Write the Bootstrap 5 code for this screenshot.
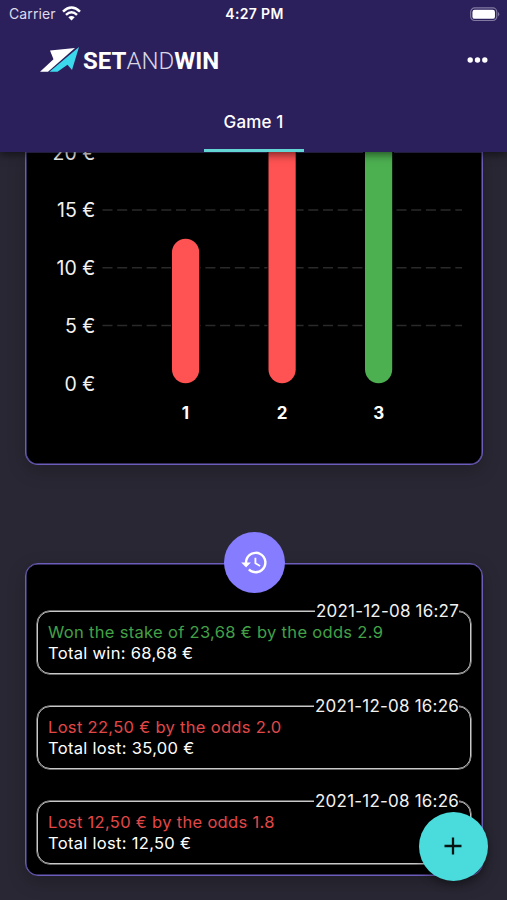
<!DOCTYPE html>
<html lang="en">
<head>
<meta charset="utf-8">
<meta name="viewport" content="width=device-width, initial-scale=1">
<title>SetAndWin</title>
<link href="https://cdn.jsdelivr.net/npm/bootstrap@5.3.0/dist/css/bootstrap.min.css" rel="stylesheet">
<style>
  body { font-family: Inter, "Liberation Sans", sans-serif; background: #292733; color: #fff; height: 900px; overflow: hidden; }
  .app-header { height: 152px; background: #2c205c; box-shadow: 0 3px 8px rgba(0,0,0,.5); z-index: 10; }
  .status-bar { height: 28px; padding: 0 7px 0 9px; display: grid; grid-template-columns: 1fr auto 1fr; font-size: 14px; line-height: 28px; }
  .carrier { color: #dedbea; letter-spacing: .1px; }
  .wifi { margin: -2px 0 0 6px; }
  .clock { letter-spacing: .35px; }
  .brand-row { height: 64px; padding: 0 19px 0 40px; }
  .brand-name { font-family: Roboto, sans-serif; font-size: 24px; line-height: 28px; margin: 2px 0 0 3px; }
  .brand-name b { font-weight: 700; }
  .brand-name span { font-weight: 300; color: #d9d6e6; }
  .game-tab { width: 100px; height: 60px; border-bottom: 3px solid #62d5d4; font-size: 17px; font-weight: 500; line-height: 60px; letter-spacing: .15px; }
  .panel { margin: 0 24px 0 25px; background: #000; border: 1px solid #6d5dbb; box-shadow: inset 0 0 0 .5px #6d5dbb, 0 6px 18px rgba(0,0,0,.22); }
  .chart-panel { height: 313px; border-top: 0; border-radius: 0 0 13px 13px; }
  .history-panel { margin-top: 98px; height: 313px; border-radius: 13px; padding: 47px 11px 0; }
  .history-icon { width: 61px; height: 61px; background: #857cff; top: -32px; left: 198px; }
  .bet { height: 63px; border: 1px solid #c9c9c9; box-shadow: 0 0 0 .5px #c9c9c9; border-radius: 13px; padding: 9.500px 10px; margin-bottom: 32.2px; font-size: 16.55px; line-height: 21px; letter-spacing: .3px; white-space: nowrap; }
  .bet time { right: 11px; top: -11px; background: #000; line-height: 21px; padding-left: 1px; color: #f1f1f1; font-size: 17px; letter-spacing: .21px; }
  .won { color: #43a047; }
  .lost { color: #e04848; }
  .add-btn { width: 69px; height: 69px; right: 19.500px; bottom: 19.500px; background: #4adcdc; box-shadow: 0 4px 8px rgba(0,0,0,.35); z-index: 5; }
</style>
<script src="https://cdn.jsdelivr.net/npm/bootstrap@5.3.0/dist/js/bootstrap.bundle.min.js"></script>
</head>
<body class="d-flex flex-column position-relative">
<header class="app-header position-relative flex-shrink-0">
  <div class="status-bar">
    <div class="d-flex align-items-center"><span class="carrier">Carrier</span>
      <svg class="wifi" width="19" height="15" viewBox="0 0 19 15" fill="none" stroke="#fff" stroke-width="2.500"><path d="M1 5.600Q9.500-2.500 18 5.600M4 8.800Q9.500 3.700 15 8.800"/><path d="M6.300 11.200Q9.500 8.600 12.700 11.200L9.500 14.500Z" fill="#fff" stroke="none"/></svg>
    </div>
    <div class="fw-semibold clock">4:27 PM</div>
    <div class="d-flex align-items-center justify-content-end">
      <svg width="30" height="15" viewBox="0 0 31 15"><rect x=".7" y=".7" width="27" height="13" rx="4.200" fill="none" stroke="#827aa1" stroke-width="1.200"/><rect x="2.500" y="2.500" width="23.300" height="9.500" rx="2.300" fill="#fff"/><path d="M29 5Q31.500 7.200 29 9.500Z" fill="#827aa1"/></svg>
    </div>
  </div>
  <div class="brand-row d-flex align-items-center justify-content-between">
    <div class="d-flex align-items-center">
      <svg width="40" height="26" viewBox="0 0 40 26"><path d="M10 3.500L35 1L8 24.800H0L13.500 12.200Z" fill="#fff"/><path d="M39 0L32 23L27.500 17.800L17.500 24.800H9.500Z" fill="#3cd8ec"/></svg>
      <div class="brand-name"><b>SET</b><span>AND</span><b>WIN</b></div>
    </div>
    <svg width="21" height="8" viewBox="0 0 21 8" fill="#fff"><circle cx="3.200" cy="4" r="2.700"/><circle cx="10.500" cy="4" r="2.700"/><circle cx="17.800" cy="4" r="2.700"/></svg>
  </div>
  <nav class="d-flex justify-content-center"><div class="game-tab text-center">Game 1</div></nav>
</header>
<main>
  <section class="panel chart-panel">
    <svg class="d-block" width="454" height="311" viewBox="26 152 454 311">
      <g stroke="#2a2a2a" stroke-width="1.500" stroke-dasharray="10 4.700"><path d="M102.500 210H462M102.500 267.700H462M102.500 325.500H462"/></g>
      <g fill="#f2f2f2" font-size="19.500" text-anchor="end"><text x="95.300" y="159.500">20 €</text><text x="95.300" y="217">15 €</text><text x="95.300" y="275">10 €</text><text x="95.300" y="332.700">5 €</text><text x="95.300" y="390.500">0 €</text></g>
      <rect x="171" y="238.500" width="29" height="145" rx="14.500"/><rect x="172" y="238.700" width="27.200" height="144.500" rx="13.600" fill="#ff5252"/>
      <rect x="267.500" y="100" width="29" height="284" rx="14.500"/><rect x="268.500" y="100" width="27.200" height="283.200" rx="13.600" fill="#ff5252"/>
      <rect x="363" y="100" width="31" height="284" rx="14.500"/><rect x="365" y="100" width="27.200" height="283.200" rx="13.600" fill="#4caf50"/>
      <g fill="#fff" font-size="17" font-weight="700" text-anchor="middle"><text x="185.500" y="419">1</text><text x="282" y="419">2</text><text x="378.700" y="419">3</text></g>
    </svg>
  </section>
  <section class="panel history-panel position-relative">
    <div class="history-icon position-absolute rounded-circle d-flex align-items-center justify-content-center">
      <svg width="29" height="29" viewBox="0 0 24 24" fill="#fff"><path d="M13 3a9 9 0 0 0-9 9H1l3.900 3.900.070.140L9 12H6a7 7 0 1 1 2.060 4.940l-1.420 1.420A9 9 0 1 0 13 3zm-1 5v5l4.280 2.540.720-1.210-3.500-2.080V8z"/></svg>
    </div>
    <article class="bet position-relative"><time class="position-absolute">2021-12-08 16:27</time><div class="won">Won the stake of 23,68 € by the odds 2.9</div><div>Total win: 68,68 €</div></article>
    <article class="bet position-relative"><time class="position-absolute">2021-12-08 16:26</time><div class="lost">Lost 22,50 € by the odds 2.0</div><div>Total lost: 35,00 €</div></article>
    <article class="bet position-relative"><time class="position-absolute">2021-12-08 16:26</time><div class="lost">Lost 12,50 € by the odds 1.8</div><div>Total lost: 12,50 €</div></article>
  </section>
</main>
<button class="add-btn btn border-0 rounded-circle p-0 position-absolute d-flex align-items-center justify-content-center" aria-label="Add bet">
  <svg width="18" height="18" viewBox="0 0 18 18" stroke="#071414" stroke-width="2.300"><path d="M9 .5V17.500M.5 9H17.500"/></svg>
</button>
</body>
</html>
